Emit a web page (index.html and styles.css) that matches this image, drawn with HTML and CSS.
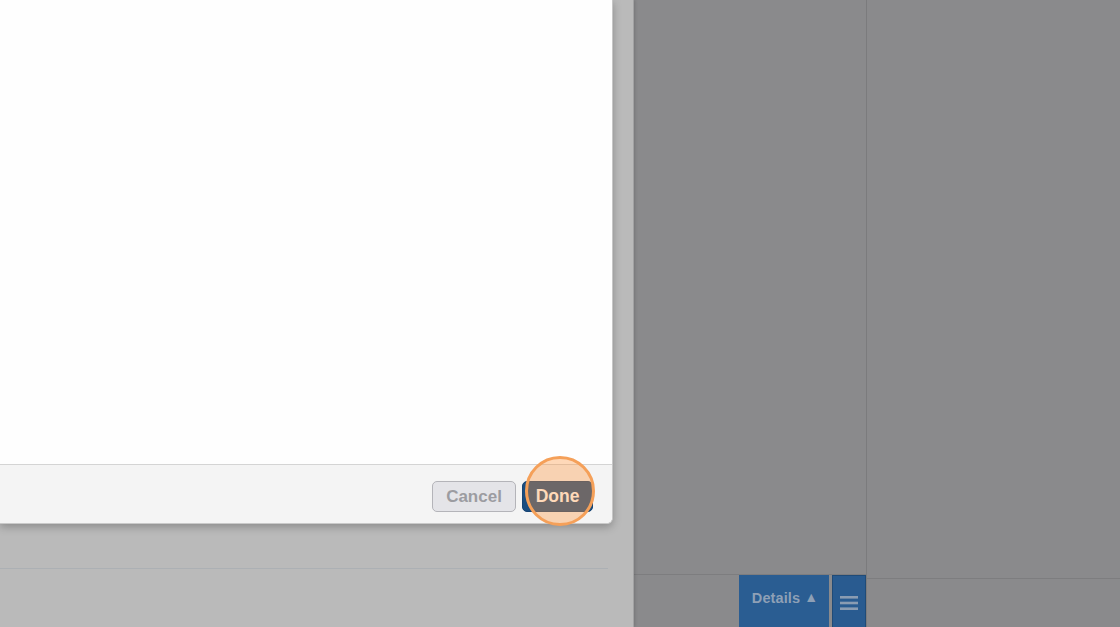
FILE: index.html
```html
<!DOCTYPE html>
<html>
<head>
<meta charset="utf-8">
<link rel="stylesheet" href="styles.css">
</head>
<body>
<div class="page">
  <div class="left-pane">
    <div class="dialog">
      <div class="dialog-body"></div>
      <div class="dialog-footer">
        <button class="btn btn-cancel">Cancel</button>
        <div class="done-wrap">
          <button class="btn btn-done">Done</button>
          <span class="highlight"></span>
        </div>
      </div>
    </div>
    <div class="under-dialog"></div>
    <div class="under-rest"></div>
  </div>
  <div class="right-pane">
    <div class="main-col">
      <div class="main-area"></div>
      <div class="bottom-bar">
        <button class="details-btn">Details <span class="tri">▲</span></button>
        <button class="menu-btn" aria-label="Menu">
          <svg width="18" height="16" viewBox="0 0 18 16"><rect x="0" y="1" width="18" height="2.6" fill="#8a9cb2"/><rect x="0" y="6.7" width="18" height="2.6" fill="#8a9cb2"/><rect x="0" y="12.4" width="18" height="2.6" fill="#8a9cb2"/></svg>
        </button>
      </div>
    </div>
    <div class="side-col">
      <div class="side-area"></div>
      <div class="side-bar"></div>
    </div>
  </div>
</div>
</body>
</html>
```

FILE: styles.css
```css
* { box-sizing: border-box; }
html, body { margin: 0; padding: 0; }
body {
  width: 1120px;
  height: 627px;
  overflow: hidden;
  font-family: "Liberation Sans", Arial, sans-serif;
  background: #8a8a8c;
}
.page {
  display: flex;
  width: 1120px;
  height: 627px;
}
.left-pane {
  width: 634px;
  height: 627px;
  background: #bababa;
  border-right: 1px solid #a2a2a3;
  display: flex;
  flex-direction: column;
  box-shadow: 1px 0 3px rgba(0,0,0,0.15);
  position: relative;
  z-index: 1;
}
.dialog {
  width: 613px;
  height: 524px;
  background: #fefefe;
  border-right: 1px solid #c6c6c6;
  border-bottom: 1px solid #c9c9c9;
  border-bottom-right-radius: 6px;
  box-shadow: 0 3px 8px rgba(0,0,0,0.25);
  display: flex;
  flex-direction: column;
  position: relative;
  z-index: 2;
}
.dialog-body {
  height: 465px;
  border-bottom: 1px solid #d4d4d4;
}
.dialog-footer {
  flex: 1;
  background: #f4f4f4;
  border-bottom-right-radius: 6px;
  display: flex;
  justify-content: flex-end;
  align-items: flex-start;
  padding: 16px 19px 0 0;
  gap: 6px;
}
.btn {
  height: 31px;
  border-radius: 5px;
  font-family: "Liberation Sans", Arial, sans-serif;
  font-weight: bold;
  font-size: 17px;
  padding: 0;
  margin: 0;
  line-height: 29px;
  cursor: default;
}
.btn-cancel {
  width: 84px;
  background: #e4e4e8;
  border: 1px solid #b4b4b9;
  color: #9c9ca1;
}
.done-wrap {
  position: relative;
}
.btn-done {
  width: 71px;
  background: #1a4d80;
  border: 1px solid #164474;
  color: #ffffff;
  font-size: 17.5px;
}
.highlight {
  position: absolute;
  left: 3px;
  top: -25px;
  width: 70px;
  height: 70px;
  border-radius: 50%;
  background: rgba(255, 150, 62, 0.36);
  border: 3px solid #f5a059;
  pointer-events: none;
}
.under-dialog {
  height: 45px;
  border-bottom: 1px solid #acb0b4;
  width: 608px;
}
.under-rest {
  flex: 1;
}
.right-pane {
  flex: 1;
  display: flex;
  height: 627px;
  background: #8a8a8c;
}
.main-col {
  width: 233px;
  display: flex;
  flex-direction: column;
  border-right: 1px solid #7b7b7d;
}
.main-area {
  height: 574px;
}
.bottom-bar {
  flex: 1;
  border-top: 1px solid #7d7d7f;
  display: flex;
  justify-content: flex-end;
  gap: 3px;
}
.details-btn {
  width: 90px;
  height: 100%;
  background: #2a5d92;
  border: none;
  margin: 0;
  padding: 0 0 6px 2px;
  color: #8ea0b6;
  font-family: "Liberation Sans", Arial, sans-serif;
  font-weight: bold;
  font-size: 14.5px;
  letter-spacing: 0.1px;
}
.tri {
  font-size: 14px;
  position: relative;
  top: -1px;
}
.menu-btn {
  width: 34px;
  height: 100%;
  background: #295b90;
  border: 1px solid #1f4b78;
  border-bottom: none;
  margin: 0;
  padding: 2px 0 0 0;
  display: flex;
  align-items: center;
  justify-content: center;
}
.side-col {
  flex: 1;
  display: flex;
  flex-direction: column;
}
.side-area {
  height: 578px;
}
.side-bar {
  flex: 1;
  border-top: 1px solid #7d7d7f;
}
```
